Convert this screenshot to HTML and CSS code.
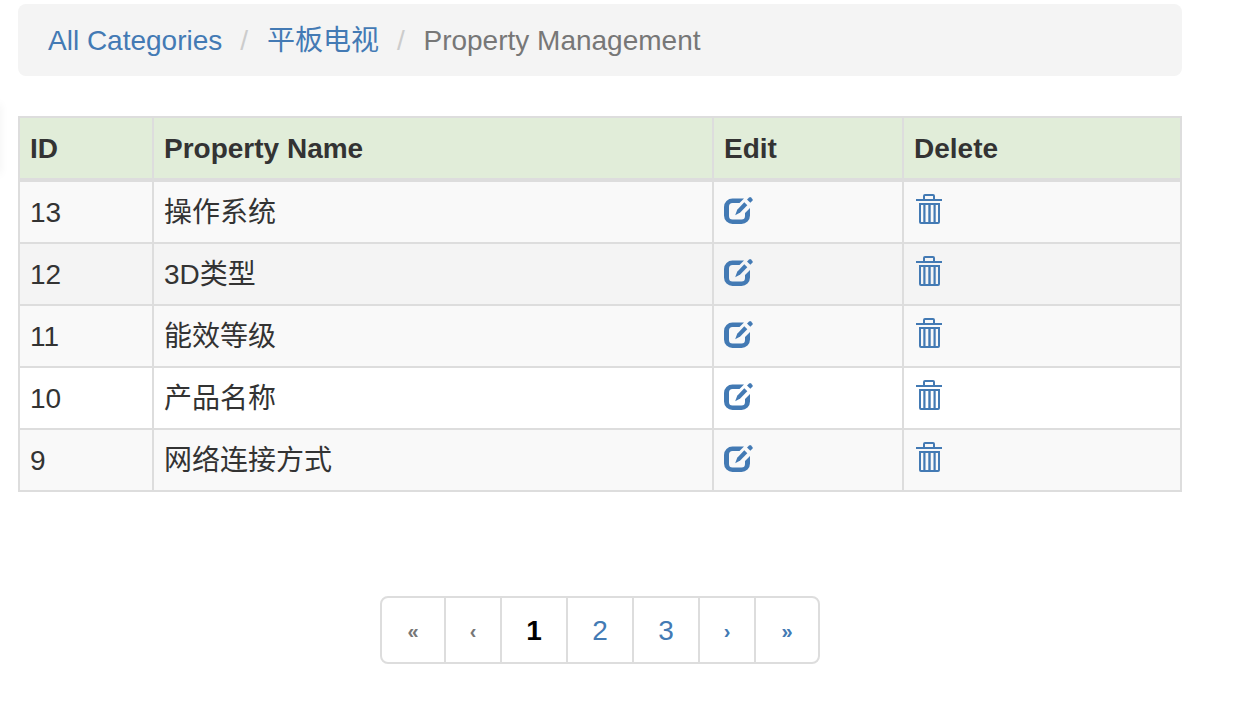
FILE: index.html
```html
<!DOCTYPE html>
<html lang="en">
<head>
<meta charset="utf-8">
<title>Property Management</title>
<link rel="stylesheet" href="styles.css">
</head>
<body>
<svg class="sprite" aria-hidden="true">
  <symbol id="icon-edit" viewBox="0 0 30 36">
    <path d="M20 4.500H8.500A8.500 8.500 0 0 0 0 13V21.500A8.500 8.500 0 0 0 8.500 30H17.500A8.500 8.500 0 0 0 26 21.500V14L21 19V22A3.500 3.500 0 0 1 17.500 25.500H8.500A3.500 3.500 0 0 1 5 22V12.500A3.500 3.500 0 0 1 8.500 9H15.500Z"/>
    <path d="M11.200 21.200L13.200 15.800L20.300 8.300L23.300 11.300L16.200 18.600Z"/>
    <path d="M23 5.400L25.200 3.400Q26.100 2.700 27 3.500L28.400 4.900Q29.200 5.800 28.400 6.700L26.300 8.700Z"/>
  </symbol>
  <symbol id="icon-trash" viewBox="0 0 30 36">
    <path d="M2 5H9V2A2 2 0 0 1 11 0H19A2 2 0 0 1 21 2V5H28V7H2ZM11 5H19V2H11Z" fill-rule="evenodd"/>
    <path d="M5 9H26V28A2 2 0 0 1 24 30H7A2 2 0 0 1 5 28ZM7 11V28H9.300V11ZM11.500 11V28H14.300V11ZM16.700 11V28H19.500V11ZM21.700 11V28H24V11Z" fill-rule="evenodd"/>
  </symbol>
</svg>
<main class="page">
  <nav aria-label="Breadcrumb">
    <ol class="breadcrumb">
      <li><a href="#">All Categories</a></li>
      <li><a href="#">平板电视</a></li>
      <li class="current">Property Management</li>
    </ol>
  </nav>

  <table class="properties">
    <colgroup><col class="col-id"><col><col class="col-edit"><col class="col-delete"></colgroup>
    <thead>
      <tr><th>ID</th><th>Property Name</th><th>Edit</th><th>Delete</th></tr>
    </thead>
    <tbody>
      <tr><td>13</td><td>操作系统</td>
        <td><a class="action" href="#" aria-label="Edit 13"><svg class="icon"><use href="#icon-edit"/></svg></a></td>
        <td><a class="action" href="#" aria-label="Delete 13"><svg class="icon"><use href="#icon-trash"/></svg></a></td></tr>
      <tr class="active"><td>12</td><td>3D类型</td>
        <td><a class="action" href="#" aria-label="Edit 12"><svg class="icon"><use href="#icon-edit"/></svg></a></td>
        <td><a class="action" href="#" aria-label="Delete 12"><svg class="icon"><use href="#icon-trash"/></svg></a></td></tr>
      <tr><td>11</td><td>能效等级</td>
        <td><a class="action" href="#" aria-label="Edit 11"><svg class="icon"><use href="#icon-edit"/></svg></a></td>
        <td><a class="action" href="#" aria-label="Delete 11"><svg class="icon"><use href="#icon-trash"/></svg></a></td></tr>
      <tr><td>10</td><td>产品名称</td>
        <td><a class="action" href="#" aria-label="Edit 10"><svg class="icon"><use href="#icon-edit"/></svg></a></td>
        <td><a class="action" href="#" aria-label="Delete 10"><svg class="icon"><use href="#icon-trash"/></svg></a></td></tr>
      <tr><td>9</td><td>网络连接方式</td>
        <td><a class="action" href="#" aria-label="Edit 9"><svg class="icon"><use href="#icon-edit"/></svg></a></td>
        <td><a class="action" href="#" aria-label="Delete 9"><svg class="icon"><use href="#icon-trash"/></svg></a></td></tr>
    </tbody>
  </table>

  <nav aria-label="Pages">
    <ul class="pagination">
      <li class="double disabled"><a href="#">«</a></li>
      <li class="single disabled"><a href="#">‹</a></li>
      <li class="number current"><a href="#">1</a></li>
      <li class="number"><a href="#">2</a></li>
      <li class="number"><a href="#">3</a></li>
      <li class="single"><a href="#">›</a></li>
      <li class="double"><a href="#">»</a></li>
    </ul>
  </nav>
</main>
</body>
</html>
```

FILE: styles.css
```css
* {
  box-sizing: border-box;
}

body {
  margin: 0;
  background: #fff;
  color: #333;
  font-family: "Liberation Sans", "Noto Sans CJK SC", sans-serif;
  font-size: 28px;
  line-height: 40px;
}

/* Soft edge of the neighbouring panel */
body::before {
  content: "";
  position: absolute;
  top: 104px;
  left: -4px;
  width: 4px;
  height: 70px;
  box-shadow: 0 0 8px rgba(0, 0, 0, 0.08);
}

a {
  color: #437ab4;
  text-decoration: none;
}

.sprite {
  display: none;
}

.page {
  padding: 4px 66px 40px 18px;
}

.breadcrumb {
  display: flex;
  margin: 0 0 40px;
  padding: 17px 30px 15px;
  list-style: none;
  border-radius: 8px;
  background: #f4f4f4;
}

.breadcrumb li + li::before {
  content: "/\00a0";
  padding: 0 11px 0 18px;
  color: #ccc;
}

.breadcrumb .current {
  color: #777;
}

.properties {
  width: 100%;
  table-layout: fixed;
  border-collapse: separate;
  border-spacing: 0;
  border: solid #ddd;
  border-width: 2px 0 0 2px;
}

.col-id {
  width: 134px;
}

.col-edit {
  width: 190px;
}

.col-delete {
  width: 278px;
}

.properties th,
.properties td {
  padding: 11px 10px 9px;
  border: solid #ddd;
  border-width: 0 2px 2px 0;
  text-align: left;
  vertical-align: top;
}

.properties th {
  border-bottom-width: 4px;
  background: #e1edd9;
}

.properties tbody tr:nth-child(odd) {
  background: #f9f9f9;
}

.properties tbody .active {
  background: #f4f4f4;
}

.action {
  display: flex;
  align-items: center;
  height: 38px;
}

.icon {
  width: 30px;
  height: 36px;
  fill: currentColor;
}

.pagination {
  display: flex;
  justify-content: center;
  margin: 104px 0 0;
  padding: 0;
  list-style: none;
}

.pagination a {
  display: block;
  padding: 13px 0 11px;
  border: 2px solid #ddd;
  text-align: center;
}

.pagination li + li {
  margin-left: -2px;
}

.pagination .number {
  width: 68px;
}

.pagination .single,
.pagination .double {
  width: 58px;
  font-size: 20px;
  font-weight: bold;
}

.pagination .double {
  width: 66px;
}

.pagination li:first-child a {
  border-radius: 8px 0 0 8px;
}

.pagination li:last-child a {
  border-radius: 0 8px 8px 0;
}

.pagination .disabled a {
  color: #777;
}

.pagination .current a {
  color: #000;
  font-weight: bold;
}
```
